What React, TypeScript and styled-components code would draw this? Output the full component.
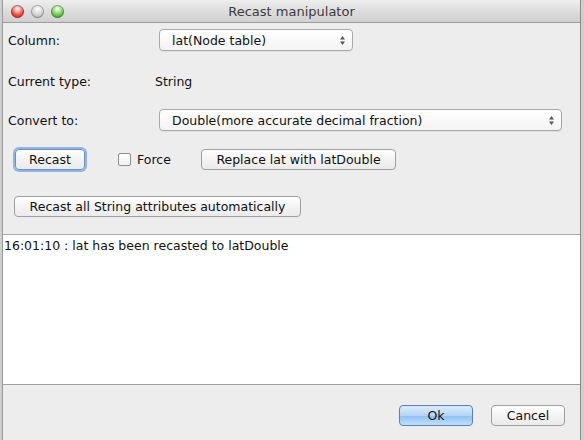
import React from "react";
import styled, { createGlobalStyle, css } from "styled-components";

const Global = createGlobalStyle`
  html, body { margin: 0; padding: 0; }
  body {
    width: 584px;
    height: 440px;
    overflow: hidden;
    background: #cfcfcf;
    font-family: "Lucida Grande", "DejaVu Sans", "Liberation Sans", sans-serif;
    font-size: 12.5px;
    color: #111;
  }
`;

const Desk = styled.div`
  display: flex;
  width: 584px;
  height: 440px;
  padding-left: 2px;
  box-sizing: border-box;
`;

const Window = styled.div`
  width: 579px;
  height: 440px;
  display: flex;
  flex-direction: column;
  background: #ededed;
  border-left: 1px solid #9a9a9a;
  border-right: 1px solid #8a8a8a;
  box-sizing: border-box;
`;

const TitleBar = styled.div`
  height: 22px;
  flex: none;
  display: flex;
  align-items: center;
  position: relative;
  background: linear-gradient(#eeeeee, #dadada 60%, #d0d0d0);
  border-bottom: 1px solid #9d9d9d;
`;

const Lights = styled.div`
  display: flex;
  gap: 7px;
  padding-left: 8px;
`;

const Light = styled.span<{ $c: string; $e: string }>`
  width: 13px;
  height: 13px;
  border-radius: 50%;
  background: radial-gradient(circle at 50% 30%, #fff 0%, ${(p) => p.$c} 55%, ${(p) => p.$e} 100%);
  box-shadow: inset 0 0 0 1px rgba(0, 0, 0, 0.25);
`;

const Title = styled.div`
  position: absolute;
  left: 0;
  right: 0;
  text-align: center;
  font-size: 13px;
  color: #3c3c3c;
  pointer-events: none;
`;

const Form = styled.div`
  display: flex;
  flex-direction: column;
  padding: 6px 0 0 5px;
  flex: none;
`;

const Row = styled.div<{ $mt?: number; $h?: number }>`
  display: flex;
  align-items: center;
  height: ${(p) => p.$h ?? 22}px;
  margin-top: ${(p) => p.$mt ?? 0}px;
`;

const Label = styled.div`
  width: 151px;
`;

const Value = styled.div`
  margin-left: -4px;
`;

const Select = styled.div<{ $w: number }>`
  width: ${(p) => p.$w}px;
  height: 22px;
  box-sizing: border-box;
  display: flex;
  align-items: center;
  justify-content: space-between;
  padding: 0 6px 0 12px;
  border: 1px solid #a8a8a8;
  border-radius: 4px;
  background: linear-gradient(#ffffff, #f3f3f3);
  box-shadow: 0 1px 0 rgba(0, 0, 0, 0.05);
`;

const Arrows = styled.svg`
  width: 7px;
  height: 11px;
`;

const Button = styled.button<{ $w: number; $focus?: boolean; $primary?: boolean; $ml?: number }>`
  width: ${(p) => p.$w}px;
  height: 21px;
  margin-left: ${(p) => p.$ml ?? 0}px;
  box-sizing: border-box;
  border: 1px solid #9f9f9f;
  border-radius: 4px;
  background: linear-gradient(#ffffff, #f1f1f1 60%, #ebebeb);
  font-family: inherit;
  font-size: 12.5px;
  color: #111;
  padding: 0;
  ${(p) =>
    p.$focus &&
    css`
      border-color: #6e8fbd;
      box-shadow: 0 0 0 2px #8fb4e6;
    `}
  ${(p) =>
    p.$primary &&
    css`
      border-color: #5c7fb5;
      background: linear-gradient(#dcecfc, #b3d4f6 50%, #90c0f2 52%, #bfe0fb);
    `}
`;

const Check = styled.span`
  width: 13px;
  height: 13px;
  box-sizing: border-box;
  border: 1px solid #8d8d8d;
  border-radius: 2px;
  background: linear-gradient(#fff, #f2f2f2);
  margin-left: 33px;
`;

const CheckLabel = styled.span`
  width: 64px;
  margin-left: 6px;
`;

const Log = styled.div`
  margin-top: 17px;
  height: 151px;
  flex: none;
  box-sizing: border-box;
  background: #fff;
  border-top: 1px solid #a8a8a8;
  border-bottom: 1px solid #a0a0a0;
  padding: 3px 0 0 1px;
  color: #111;
`;

const Footer = styled.div`
  display: flex;
  justify-content: flex-end;
  gap: 18px;
  padding: 20px 15px 0 0;
`;

const SelectArrows = () => (
  <Arrows viewBox="0 0 7 11">
    <path d="M3.5 1 L6 4.5 L1 4.5 Z" fill="#555" />
    <path d="M3.5 10 L6 6.5 L1 6.5 Z" fill="#555" />
  </Arrows>
);

export default function App() {
  return (
    <>
      <Global />
      <Desk>
        <Window>
          <TitleBar>
            <Lights>
              <Light $c="#f04a42" $e="#9c1c16" />
              <Light $c="#d0d0d0" $e="#8f8f8f" />
              <Light $c="#6cc84a" $e="#2e7a1c" />
            </Lights>
            <Title>Recast manipulator</Title>
          </TitleBar>
          <Form>
            <Row>
              <Label>Column:</Label>
              <Select $w={194}>
                <span>lat(Node table)</span>
                <SelectArrows />
              </Select>
            </Row>
            <Row $mt={19}>
              <Label>Current type:</Label>
              <Value>String</Value>
            </Row>
            <Row $mt={17}>
              <Label>Convert to:</Label>
              <Select $w={403}>
                <span>Double(more accurate decimal fraction)</span>
                <SelectArrows />
              </Select>
            </Row>
            <Row $mt={18} $h={21}>
              <Button $w={70} $focus $ml={7}>Recast</Button>
              <Check />
              <CheckLabel>Force</CheckLabel>
              <Button $w={195}>Replace lat with latDouble</Button>
            </Row>
            <Row $mt={26} $h={21}>
              <Button $w={287} $ml={6}>Recast all String attributes automatically</Button>
            </Row>
          </Form>
          <Log>16:01:10 : lat has been recasted to latDouble</Log>
          <Footer>
            <Button $w={74} $primary>Ok</Button>
            <Button $w={74}>Cancel</Button>
          </Footer>
        </Window>
      </Desk>
    </>
  );
}
